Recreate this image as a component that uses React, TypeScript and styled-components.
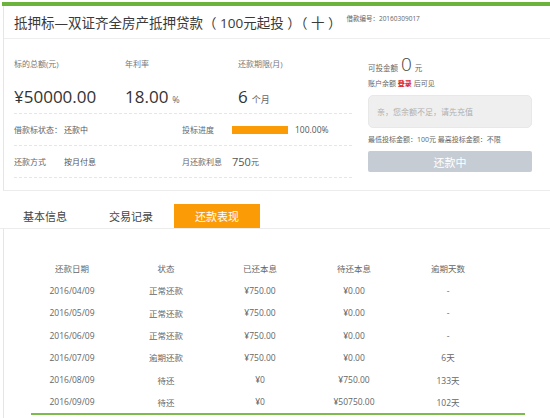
import React from 'react';
import styled, { createGlobalStyle } from 'styled-components';

const Global = createGlobalStyle`
  html, body { margin: 0; padding: 0; background: #fff; }
  body {
    font-family: "Open Sans", "Noto Sans CJK SC", sans-serif;
    color: #333;
    overflow: hidden;
  }
`;

const Page = styled.div`
  width: 550px;
  height: 418px;
  overflow: hidden;
  padding-top: 2px;
  box-sizing: border-box;
`;

const GreenBar = styled.div`
  margin-left: 2px;
  height: 4px;
  background: #6cb33e;
`;

const Card = styled.section`
  margin-left: 3px;
  border-left: 1px solid #e6e6e6;
  border-bottom: 1px solid #ececec;
`;

const TitleBar = styled.header`
  height: 32px;
  display: flex;
  align-items: center;
  padding-left: 10px;
  border-bottom: 1px solid #eeeeee;
`;

const Title = styled.h1`
  margin: 0;
  font-size: 13.5px;
  font-weight: 400;
  color: #3a3a3a;
  white-space: nowrap;
`;

const LoanNo = styled.span`
  margin-left: 5px;
  margin-top: -9px;
  font-size: 6.5px;
  color: #666;
  white-space: nowrap;
`;

const Body = styled.div`
  display: flex;
  height: 151px;
`;

const LeftCol = styled.div`
  width: 338px;
  padding-left: 10px;
`;

const StatsTop = styled.div`
  display: grid;
  grid-template-columns: 111px 113px 1fr;
  padding-top: 18px;
  padding-bottom: 1px;
  border-bottom: 1px dashed #e6e6e6;
`;

const Stat = styled.div`
  display: flex;
  flex-direction: column;
`;

const StatLabel = styled.div`
  height: 14px;
  line-height: 14px;
  font-size: 8px;
  color: #777;
  white-space: nowrap;
`;

const StatValue = styled.div`
  margin-top: 11px;
  height: 30px;
  line-height: 30px;
  font-size: 17px;
  color: #333;
  white-space: nowrap;
`;

const Unit = styled.span`
  font-size: 9px;
  color: #666;
  margin-left: 4px;
`;

const InfoRow = styled.div`
  display: grid;
  grid-template-columns: 50px 118px 50px 1fr;
  align-items: center;
  height: 31px;
  border-bottom: 1px dashed #e6e6e6;
  font-size: 8px;
  color: #666;
  white-space: nowrap;
`;

const InfoValue = styled.span`
  color: #555;
  display: flex;
  align-items: center;
`;

const Progress = styled.span`
  display: inline-block;
  width: 56px;
  height: 8px;
  background: #fb9c06;
  margin-right: 7px;
`;

const ProgressText = styled.span`
  font-size: 8.5px;
  color: #555;
`;

const Money = styled.span`
  font-size: 11px;
  color: #555;
`;

const RightCol = styled.div`
  margin-left: 16px;
  width: 164px;
  padding-top: 12px;
  display: flex;
  flex-direction: column;
`;

const AvailRow = styled.div`
  height: 21px;
  display: flex;
  align-items: baseline;
  font-size: 7.5px;
  color: #666;
  white-space: nowrap;
`;

const BigZero = styled.span`
  font-size: 19px;
  font-weight: 300;
  color: #444;
  margin: 0 3px 0 3px;
`;

const SmallLine = styled.div<{ $gap: number }>`
  margin-top: ${p => p.$gap}px;
  height: 14px;
  line-height: 14px;
  font-size: 7px;
  color: #666;
  white-space: nowrap;
`;

const LoginLink = styled.span`
  color: #d8282c;
  font-weight: 700;
`;

const AmountBox = styled.div`
  margin-top: 4px;
  height: 33px;
  box-sizing: border-box;
  border: 1px solid #e8e8e8;
  border-radius: 5px;
  background: #efefef;
  display: flex;
  align-items: center;
  padding-left: 8px;
  font-size: 8px;
  color: #b0b0b0;
`;

const StateButton = styled.div`
  margin-top: 4px;
  height: 21px;
  background: #c5ccd3;
  border-radius: 2px;
  color: #fff;
  font-size: 11px;
  display: flex;
  align-items: center;
  justify-content: center;
`;

const TabBar = styled.nav`
  display: flex;
  padding-top: 13px;
  padding-left: 2px;
  border-bottom: 1px solid #ececec;
`;

const Tab = styled.div<{ $active?: boolean }>`
  width: 86px;
  height: 24px;
  display: flex;
  align-items: center;
  justify-content: center;
  font-size: 11px;
  color: ${p => (p.$active ? '#fff' : '#444')};
  background: ${p => (p.$active ? '#fb9c06' : 'transparent')};
`;

const Content = styled.section`
  margin-left: 3px;
  border-left: 1px solid #e6e6e6;
  padding-top: 28px;
  height: 200px;
`;

const Table = styled.div`
  margin-left: 21px;
  width: 470px;
  display: grid;
  grid-template-columns: repeat(5, 94px);
  grid-auto-rows: 22.3px;
`;

const Cell = styled.div`
  display: flex;
  align-items: center;
  justify-content: center;
  font-size: 8.5px;
  color: #666;
  white-space: nowrap;
`;

const GreenLine = styled.div`
  margin-left: 27px;
  width: 494px;
  height: 2px;
  background: #7dbb4a;
`;

const head = ['还款日期', '状态', '已还本息', '待还本息', '逾期天数'];
const rows = [
  ['2016/04/09', '正常还款', '¥750.00', '¥0.00', '-'],
  ['2016/05/09', '正常还款', '¥750.00', '¥0.00', '-'],
  ['2016/06/09', '正常还款', '¥750.00', '¥0.00', '-'],
  ['2016/07/09', '逾期还款', '¥750.00', '¥0.00', '6天'],
  ['2016/08/09', '待还', '¥0', '¥750.00', '133天'],
  ['2016/09/09', '待还', '¥0', '¥50750.00', '102天'],
];

export default function App() {
  return (
    <Page>
      <Global />
      <GreenBar />
      <Card>
        <TitleBar>
          <Title>抵押标—双证齐全房产抵押贷款（ 100元起投 ）（ 十 ）</Title>
          <LoanNo>借款编号：20160309017</LoanNo>
        </TitleBar>
        <Body>
          <LeftCol>
            <StatsTop>
              <Stat>
                <StatLabel>标的总额(元)</StatLabel>
                <StatValue>¥50000.00</StatValue>
              </Stat>
              <Stat>
                <StatLabel>年利率</StatLabel>
                <StatValue>18.00<Unit>%</Unit></StatValue>
              </Stat>
              <Stat>
                <StatLabel>还款期限(月)</StatLabel>
                <StatValue>6<Unit>个月</Unit></StatValue>
              </Stat>
            </StatsTop>
            <InfoRow>
              <span>借款标状态：</span>
              <InfoValue>还款中</InfoValue>
              <span>投标进度</span>
              <InfoValue>
                <Progress />
                <ProgressText>100.00%</ProgressText>
              </InfoValue>
            </InfoRow>
            <InfoRow>
              <span>还款方式</span>
              <InfoValue>按月付息</InfoValue>
              <span>月还款利息</span>
              <InfoValue>
                <Money>750</Money>元
              </InfoValue>
            </InfoRow>
          </LeftCol>
          <RightCol>
            <AvailRow>
              可投金额<BigZero>0</BigZero>元
            </AvailRow>
            <SmallLine $gap={5}>
              账户余额 <LoginLink>登录</LoginLink> 后可见
            </SmallLine>
            <AmountBox>亲，您余额不足，请先充值</AmountBox>
            <SmallLine $gap={5}>最低投标金额：100元 最高投标金额：不限</SmallLine>
            <StateButton>还款中</StateButton>
          </RightCol>
        </Body>
      </Card>
      <TabBar>
        <Tab>基本信息</Tab>
        <Tab>交易记录</Tab>
        <Tab $active>还款表现</Tab>
      </TabBar>
      <Content>
        <Table>
          {head.map(h => (
            <Cell key={h}>{h}</Cell>
          ))}
          {rows.map((r, i) =>
            r.map((c, j) => <Cell key={`${i}-${j}`}>{c}</Cell>)
          )}
        </Table>
        <GreenLine />
      </Content>
    </Page>
  );
}
